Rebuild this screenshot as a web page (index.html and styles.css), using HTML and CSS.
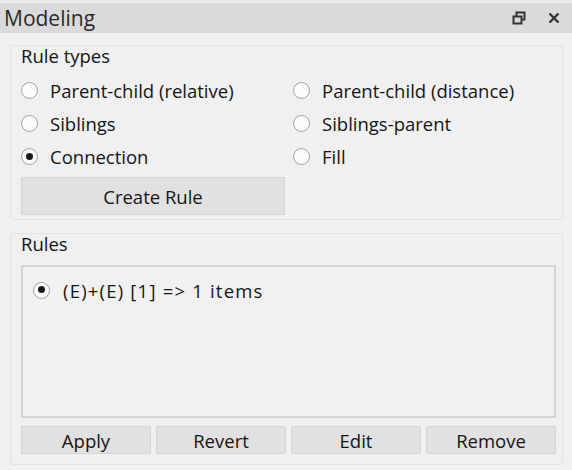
FILE: index.html
```html
<!DOCTYPE html>
<html>
<head>
<meta charset="utf-8">
<link rel="stylesheet" href="styles.css">
</head>
<body>
<div class="dock">
  <div class="titlebar">
    <span class="title">Modeling</span>
    <div class="tb-icons">
      <svg class="tb-icon" width="14" height="14" viewBox="0 0 14 14">
        <rect x="4.5" y="1.5" width="8" height="7" fill="none" stroke="#333" stroke-width="2"/>
        <rect x="1.5" y="5.5" width="8" height="7" fill="#dadada" stroke="#333" stroke-width="2"/>
      </svg>
      <svg class="tb-icon" width="14" height="14" viewBox="0 0 14 14">
        <path d="M2.5 2.5 L11.5 11.5 M11.5 2.5 L2.5 11.5" stroke="#333" stroke-width="2.4"/>
      </svg>
    </div>
  </div>
  <div class="content">
    <div class="group group-types">
      <div class="group-title">Rule types</div>
      <div class="radio-grid">
        <label class="radio"><span class="dot"></span>Parent-child (relative)</label>
        <label class="radio"><span class="dot"></span>Parent-child (distance)</label>
        <label class="radio"><span class="dot"></span>Siblings</label>
        <label class="radio"><span class="dot"></span>Siblings-parent</label>
        <label class="radio"><span class="dot checked"></span>Connection</label>
        <label class="radio"><span class="dot"></span>Fill</label>
      </div>
      <div class="create-row">
        <button class="btn btn-create">Create Rule</button>
      </div>
    </div>
    <div class="group group-rules">
      <div class="group-title">Rules</div>
      <div class="list">
        <label class="radio item"><span class="dot checked"></span>(E)+(E) [1] =&gt; 1 items</label>
      </div>
      <div class="btn-row">
        <button class="btn">Apply</button>
        <button class="btn">Revert</button>
        <button class="btn">Edit</button>
        <button class="btn">Remove</button>
      </div>
    </div>
  </div>
</div>
</body>
</html>
```

FILE: styles.css
```css
html, body {
  margin: 0;
  padding: 0;
}
* {
  box-sizing: border-box;
}
body {
  width: 572px;
  height: 470px;
  background: #f0f0f0;
  font-family: "Open Sans", "Noto Sans", sans-serif;
  font-size: 18.5px;
  color: #151515;
  overflow: hidden;
}
.dock {
  display: flex;
  flex-direction: column;
  height: 470px;
}
.titlebar {
  height: 33px;
  border-top: 3px solid #ececec;
  background: #dadada;
  display: flex;
  align-items: center;
  justify-content: space-between;
  padding: 0 11px 0 4px;
}
.title {
  font-size: 21px;
  color: #2a2a2a;
}
.tb-icons {
  display: flex;
  gap: 21px;
  align-items: center;
}
.content {
  display: flex;
  flex-direction: column;
  padding: 12px 9px 0 10px;
  gap: 13px;
}
.group {
  border: 1px solid #e2e2e2;
  border-radius: 3px;
  display: flex;
  flex-direction: column;
}
.group-types {
  height: 175px;
  padding: 0 10px;
}
.group-rules {
  height: 232px;
  padding: 0 6px 0 10px;
}
.group-title {
  height: 18px;
  line-height: 18px;
  margin-top: 1px;
}
.radio-grid {
  display: grid;
  grid-template-columns: 272px 1fr;
  grid-auto-rows: 33px;
  margin-top: 9px;
}
.radio {
  display: flex;
  align-items: center;
  gap: 12px;
}
.dot {
  width: 17px;
  height: 17px;
  border: 1.5px solid #a0a0a0;
  border-radius: 50%;
  background: #fcfcfc;
  position: relative;
  flex: none;
}
.dot.checked::after {
  content: "";
  position: absolute;
  left: 3.5px;
  top: 3.5px;
  width: 7px;
  height: 7px;
  border-radius: 50%;
  background: #1a1a1a;
}
.create-row {
  margin-top: 4px;
}
.btn {
  font-family: inherit;
  font-size: 18.5px;
  color: #151515;
  background: #e1e1e1;
  border: 1px solid #d4d4d4;
  border-radius: 1px;
  padding: 0;
}
.btn-create {
  width: 264px;
  height: 38px;
}
.list {
  margin-top: 12px;
  height: 153px;
  border: 2px solid #d4d4d4;
  background: #f1f1f1;
  padding: 12px 0 0 10px;
}
.item {
  height: 22px;
  gap: 13px;
  letter-spacing: 1.2px;
}
.btn-row {
  display: grid;
  grid-template-columns: repeat(4, 1fr);
  gap: 5px;
  margin-top: 8px;
  height: 28px;
}
```
